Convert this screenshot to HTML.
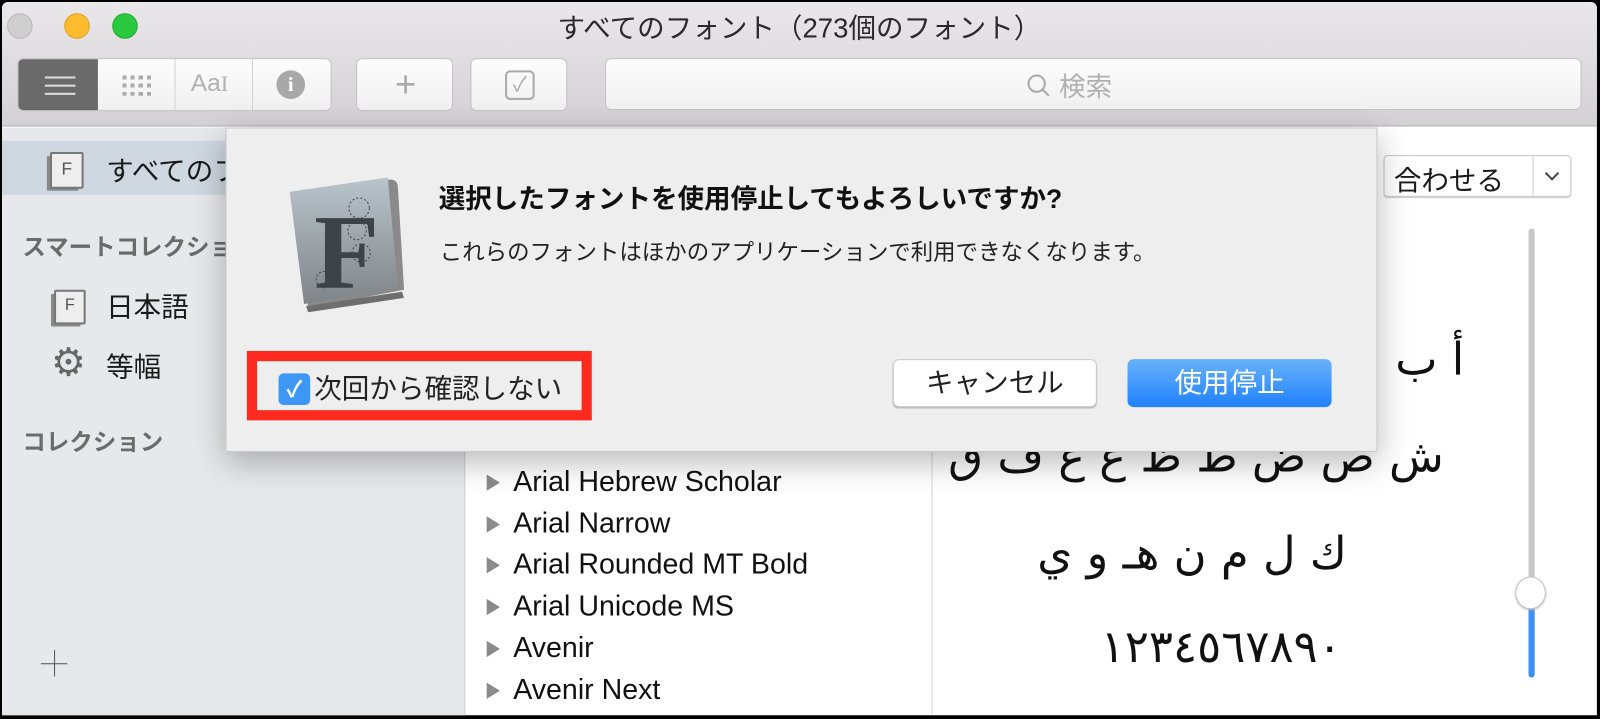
<!DOCTYPE html>
<html><head><meta charset="utf-8"><style>
*{margin:0;padding:0;box-sizing:border-box}
body{width:1600px;height:719px;background:#000;position:relative;overflow:hidden;font-family:"Liberation Sans","Noto Sans CJK JP",sans-serif;color:#1a1a1a}
.a{position:absolute}
#win{left:2px;top:2px;width:1563px;height:699px;background:#fff;overflow:hidden;border-radius:6px 6px 0 0;transform:scale(1.0204);transform-origin:0 0}
#tb{left:0;top:0;width:1563px;height:122px;background:linear-gradient(#e9e7e9,#d3d1d3);border-bottom:1px solid #b0aeb0}
.dot{width:25px;height:25px;border-radius:50%;top:11px}
.btn{background:linear-gradient(#fdfdfd,#f0f0f0);border:1px solid #c4c2c4;border-radius:6px;height:52px;top:55px}
#side{left:0;top:123px;width:454px;height:590px;background:#e7e8eb;border-right:1px solid #cfcfcf}
.jp{font-family:"Liberation Sans","Noto Sans CJK JP",sans-serif}
.list{left:501px;font-size:28px;color:#111;line-height:1.15}
.tri{left:475px;width:0;height:0;border-left:13px solid #8a8a8a;border-top:8px solid transparent;border-bottom:8px solid transparent}
.ar{font-family:"DejaVu Sans",sans-serif;font-size:44px;color:#111;white-space:nowrap}
</style></head><body>
<div id="win" class="a">
<div id="tb" class="a">
 <div class="a dot" style="left:5px;background:#d0cfd0;border:1px solid #b8b8b8"></div>
 <div class="a dot" style="left:61px;background:#fdbb2e;border:1px solid #e0a020"></div>
 <div class="a dot" style="left:108px;background:#2ac940;border:1px solid #1ea830"></div>
 <div class="a jp" style="left:0;width:1563px;top:4px;text-align:center;font-size:27px;color:#2a2a2a">すべてのフォント（273個のフォント）</div>
 <div class="a btn" style="left:15px;width:308px;overflow:hidden">
  <div class="a" style="left:0;top:0;width:78px;height:52px;background:#6a6a6a"></div>
  <div class="a" style="left:26px;top:17px;width:30px;height:2px;background:#ddd;box-shadow:0 8px 0 #ddd,0 16px 0 #ddd"></div>
  <div class="a" style="left:153px;top:0;width:1px;height:52px;background:#d0d0d0"></div>
  <div class="a" style="left:229px;top:0;width:1px;height:52px;background:#d0d0d0"></div>
  <div class="a" style="left:102px;top:16px;width:30px;height:20px;background:repeating-linear-gradient(90deg,#aaa 0 4px,transparent 4px 8px);-webkit-mask:repeating-linear-gradient(#000 0 4px,transparent 4px 8px)"></div>
  <div class="a" style="left:169px;top:10px;font-size:24px;color:#b0b0b0">Aa<span style="font-family:'Liberation Serif';font-size:22px">I</span></div>
  <div class="a" style="left:253px;top:11px;width:28px;height:28px;border-radius:50%;background:#a8a8a8;color:#fff;font:bold 20px 'Liberation Serif';text-align:center;line-height:28px">i</div>
 </div>
 <div class="a btn" style="left:347px;width:95px"><div class="a" style="left:0;width:95px;top:4px;text-align:center;font-size:36px;color:#aaa;font-weight:200">+</div></div>
 <div class="a btn" style="left:459px;width:95px"><div class="a" style="left:33px;top:11px;width:29px;height:29px;border:2px solid #aaa;border-radius:5px;color:#aaa;font-size:20px;text-align:center;line-height:25px">✓</div></div>
 <div class="a btn" style="left:591px;width:957px;top:55px;height:51px">
  <svg class="a" style="left:412px;top:14px" width="24" height="24"><circle cx="10" cy="10" r="8" fill="none" stroke="#aaa" stroke-width="2"/><line x1="16" y1="16" x2="22" y2="22" stroke="#aaa" stroke-width="2"/></svg>
  <div class="a jp" style="left:444px;top:7px;font-size:26px;color:#b0b0b0">検索</div>
 </div>
</div>
<div id="side" class="a">
 <div class="a" style="left:0;top:13px;width:454px;height:53px;background:#cfd7e0"></div>
 <div class="a" style="left:47px;top:24px;width:33px;height:36px;border:2px solid #777;border-radius:2px;background:#eee;font-size:17px;color:#555;text-align:center;line-height:30px;box-shadow:-4px 3px 0 -1px #888">F</div>
 <div class="a jp" style="left:102px;top:21px;font-size:27px">すべてのフォント</div>
 <div class="a jp" style="left:20px;top:98px;font-size:23px;font-weight:bold;color:#6b6b6b">スマートコレクション</div>
 <div class="a" style="left:51px;top:159px;width:31px;height:34px;border:2px solid #777;border-radius:2px;background:#eee;font-size:16px;color:#555;text-align:center;line-height:28px;box-shadow:-4px 3px 0 -1px #888">F</div>
 <div class="a jp" style="left:102px;top:154px;font-size:27px">日本語</div>
 <div class="a" style="left:48px;top:211px;font-size:38px;color:#666;line-height:40px">⚙</div>
 <div class="a jp" style="left:102px;top:213px;font-size:27px">等幅</div>
 <div class="a jp" style="left:20px;top:289px;font-size:23px;font-weight:bold;color:#6b6b6b">コレクション</div>
 <div class="a" style="left:38px;top:525px;width:26px;height:1px;background:#555"></div>
 <div class="a" style="left:51px;top:512px;width:1px;height:26px;background:#555"></div>
</div>
<div class="a" style="left:911px;top:123px;width:1px;height:590px;background:#d6d6d6"></div>
<div class="a tri" style="top:463px"></div><div class="a list" style="top:454px">Arial Hebrew Scholar</div>
<div class="a tri" style="top:504px"></div><div class="a list" style="top:495px">Arial Narrow</div>
<div class="a tri" style="top:544px"></div><div class="a list" style="top:535px">Arial Rounded MT Bold</div>
<div class="a tri" style="top:585px"></div><div class="a list" style="top:576px">Arial Unicode MS</div>
<div class="a tri" style="top:626px"></div><div class="a list" style="top:617px">Avenir</div>
<div class="a tri" style="top:667px"></div><div class="a list" style="top:658px">Avenir Next</div>
<div class="a" style="left:1354px;top:150px;width:184px;height:41px;border:1px solid #ccc;border-radius:4px;background:#fff;box-shadow:0 1px 1px #ccc">
 <div class="a jp" style="left:9px;top:2px;font-size:27px">合わせる</div>
 <div class="a" style="left:145px;top:0;width:1px;height:39px;background:#ccc"></div>
 <div class="a" style="left:159px;top:12px;width:10px;height:10px;border-right:2px solid #444;border-bottom:2px solid #444;transform:rotate(45deg)"></div>
</div>
<div class="a" style="left:1496px;top:222px;width:6px;height:440px;border-radius:3px;background:#c8c8c8"></div>
<div class="a" style="left:1496px;top:585px;width:6px;height:77px;border-radius:3px;background:#3b8ff5"></div>
<div class="a" style="left:1483px;top:563px;width:30px;height:32px;border-radius:50%;background:#fff;border:1px solid #c4c4c4;box-shadow:0 1px 2px #bbb"></div>
<div class="a ar" style="right:130px;top:325px" dir="rtl">أ ب ت ث</div>
<div class="a ar" style="right:150px;top:420px" dir="rtl">ش ص ض ط ظ ع غ ف ق</div>
<div class="a ar" style="right:245px;top:515px" dir="rtl">ك ل م ن هـ و ي</div>
<div class="a ar" style="right:250px;top:607px">١٢٣٤٥٦٧٨٩٠</div>
<div class="a" style="left:219px;top:123px;width:1129px;height:318px;background:#eeeeee;border:1px solid #c8c8c8;box-shadow:0 10px 30px rgba(0,0,0,.28)">
 <svg class="a" style="left:60px;top:48px" width="120" height="140">
  <defs><linearGradient id="g" x1="0" y1="0" x2="0" y2="1"><stop offset="0" stop-color="#b9c4cb"/><stop offset="1" stop-color="#7f8487"/></linearGradient></defs>
  <path d="M4 16 L100 2 Q108 2 108 10 L114 110 L20 128 Z" fill="#8a8a8a"/>
  <path d="M2 14 L98 0 L108 108 L16 124 Z" fill="url(#g)"/>
  <path d="M18 126 L112 112 L114 118 L20 132 Z" fill="#6e6e6e"/>
  <text x="26" y="108" font-family="Liberation Serif" font-weight="bold" font-size="104" fill="#3d4448">F</text>
  <circle cx="70" cy="30" r="10" fill="none" stroke="#444" stroke-dasharray="2 2"/>
  <circle cx="68" cy="52" r="9" fill="none" stroke="#444" stroke-dasharray="2 2"/>
  <circle cx="72" cy="74" r="9" fill="none" stroke="#444" stroke-dasharray="2 2"/>
  <circle cx="36" cy="100" r="8" fill="none" stroke="#444" stroke-dasharray="2 2"/>
 </svg>
 <div class="a jp" style="left:208px;top:49px;font-size:26px;font-weight:bold;color:#111">選択したフォントを使用停止してもよろしいですか?</div>
 <div class="a jp" style="left:209px;top:104px;font-size:22px;color:#222">これらのフォントはほかのアプリケーションで利用できなくなります。</div>
 <div class="a" style="left:20px;top:218px;width:338px;height:68px;border:10px solid #fe2a1f"></div>
 <div class="a" style="left:51px;top:240px;width:31px;height:31px;border-radius:5px;background:#3c98f4;color:#fff;font-size:22px;font-weight:bold;text-align:center;line-height:31px">✓</div>
 <div class="a jp" style="left:86px;top:233px;font-size:27px;color:#222">次回から確認しない</div>
 <div class="a jp" style="left:653px;top:226px;width:200px;height:47px;background:#fff;border:1px solid #cacaca;border-radius:6px;box-shadow:0 1px 1px #bbb;font-size:27px;text-align:center;line-height:45px;color:#222">キャンセル</div>
 <div class="a jp" style="left:883px;top:226px;width:200px;height:47px;background:linear-gradient(#69b1fa,#1f82fc);border-radius:6px;font-size:27px;text-align:center;line-height:47px;color:#fff">使用停止</div>
</div>
</div>
</body></html>
